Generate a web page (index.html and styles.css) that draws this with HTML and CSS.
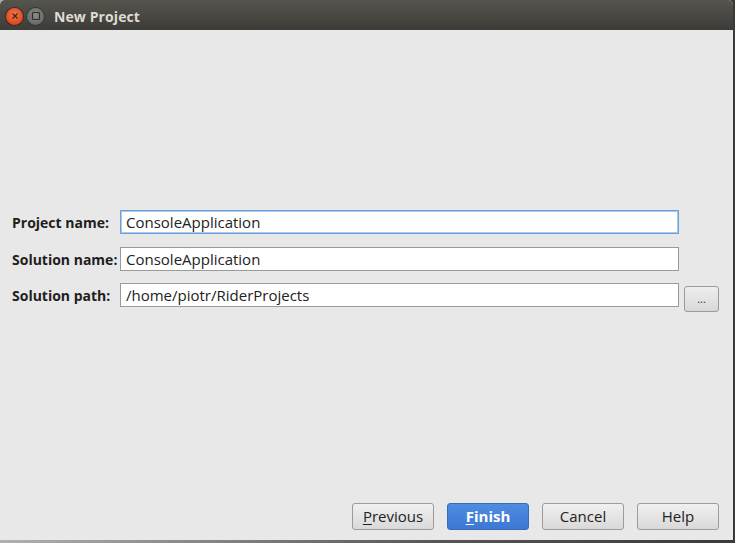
FILE: index.html
```html
<!DOCTYPE html>
<html>
<head>
<meta charset="utf-8">
<link rel="stylesheet" href="styles.css">
</head>
<body>
<div class="screen">
  <div class="window">
    <div class="titlebar">
      <div class="wbtn close">
        <svg width="16" height="16" viewBox="0 0 16 16"><path d="M5.5 5.5 L10.5 10.5 M10.5 5.5 L5.5 10.5" stroke="#3a2a22" stroke-width="1.3" fill="none"/></svg>
      </div>
      <div class="wbtn max">
        <svg width="16" height="16" viewBox="0 0 16 16"><rect x="4.5" y="4.5" width="7" height="7" rx="1" stroke="#2e2e2c" stroke-width="1.2" fill="none"/></svg>
      </div>
      <div class="title">New Project</div>
    </div>
    <div class="body">
      <div class="form">
        <div class="row">
          <label class="lbl">Project name:</label>
          <div class="field focused">ConsoleApplication</div>
          <div class="spacer"></div>
        </div>
        <div class="row second">
          <label class="lbl">Solution name:</label>
          <div class="field">ConsoleApplication</div>
          <div class="spacer"></div>
        </div>
        <div class="row">
          <label class="lbl">Solution path:</label>
          <div class="field">/home/piotr/RiderProjects</div>
          <div class="browse">...</div>
        </div>
      </div>
      <div class="buttons">
        <div class="btn"><u>P</u>revious</div>
        <div class="btn primary"><u>F</u>inish</div>
        <div class="btn">Cancel</div>
        <div class="btn">Help</div>
      </div>
    </div>
  </div>
</div>
</body>
</html>
```
FILE: styles.css
```css
html, body {
  margin: 0;
  padding: 0;
}
body {
  width: 735px;
  height: 543px;
  overflow: hidden;
  background: #c8c8c8;
  font-family: "Open Sans", "DejaVu Sans", sans-serif;
}
.screen {
  width: 735px;
  height: 543px;
  display: flex;
  flex-direction: column;
  background: linear-gradient(to right, #b0b0b0, #555 60%, #3a3a3a);
}
.window {
  width: 733px;
  height: 540px;
  display: flex;
  flex-direction: column;
  background: #e8e8e8;
  border-radius: 5px 5px 0 0;
  overflow: hidden;
}
.titlebar {
  height: 30px;
  flex: none;
  background: linear-gradient(to bottom, #56544e, #3d3c38);
  display: flex;
  align-items: center;
  padding-left: 6px;
  box-sizing: border-box;
  padding-top: 2px;
}
.wbtn {
  width: 17px;
  height: 17px;
  border-radius: 50%;
  display: flex;
  align-items: center;
  justify-content: center;
  margin-right: 4px;
}
.close {
  background: radial-gradient(circle at 50% 40%, #f47a4e, #e0461c 70%, #b83612);
  box-shadow: 0 0 0 1px #3b2a24;
}
.max {
  background: radial-gradient(circle at 50% 40%, #8a8a86, #6a6a66 70%, #55554f);
  box-shadow: 0 0 0 1px #333;
}
.title {
  margin-left: 6px;
  color: #dfdbd2;
  font-weight: bold;
  font-size: 14px;
  letter-spacing: 0.1px;
}
.body {
  flex: 1;
  display: flex;
  flex-direction: column;
  background: #e8e8e8;
}
.form {
  margin-top: 180px;
  display: flex;
  flex-direction: column;
  gap: 12px;
  padding-left: 12px;
}
.row {
  display: flex;
  align-items: center;
  height: 24px;
}
.row.second {
  margin-top: 1px;
}
.lbl {
  width: 108px;
  font-weight: bold;
  font-size: 14px;
  color: #1e1e1e;
  white-space: nowrap;
}
.field {
  width: 559px;
  height: 24px;
  box-sizing: border-box;
  border: 1px solid #9a9a9a;
  background: #fff;
  font-size: 15px;
  color: #222;
  display: flex;
  align-items: center;
  padding-left: 5px;
}
.field.focused {
  border: 1px solid #6f9fd8;
  box-shadow: 0 0 0 1px #a8c8ee inset;
}
.spacer {
  width: 40px;
}
.browse {
  margin-left: 5px;
  margin-top: 7px;
  width: 35px;
  height: 26px;
  box-sizing: border-box;
  border: 1px solid #9a9a9a;
  border-radius: 3px;
  background: linear-gradient(#eeeeee, #d8d8d8);
  display: flex;
  align-items: center;
  justify-content: center;
  font-size: 11px;
  color: #333;
}
.buttons {
  margin-top: auto;
  margin-bottom: 10px;
  display: flex;
  justify-content: flex-end;
  gap: 13px;
  padding-right: 14px;
}
.btn {
  width: 82px;
  height: 27px;
  box-sizing: border-box;
  border: 1px solid #9b9b9b;
  border-radius: 3px;
  background: linear-gradient(#f0f0f0, #d9d9d9);
  display: flex;
  align-items: center;
  justify-content: center;
  font-size: 15px;
  color: #222;
  padding-bottom: 2px;
}
.btn u {
  text-decoration-thickness: 1px;
  text-underline-offset: 2px;
}
.btn.primary {
  background: linear-gradient(#4f8be0, #3c79d4);
  border-color: #3a6bb6;
  color: #fff;
  font-weight: bold;
}
```
